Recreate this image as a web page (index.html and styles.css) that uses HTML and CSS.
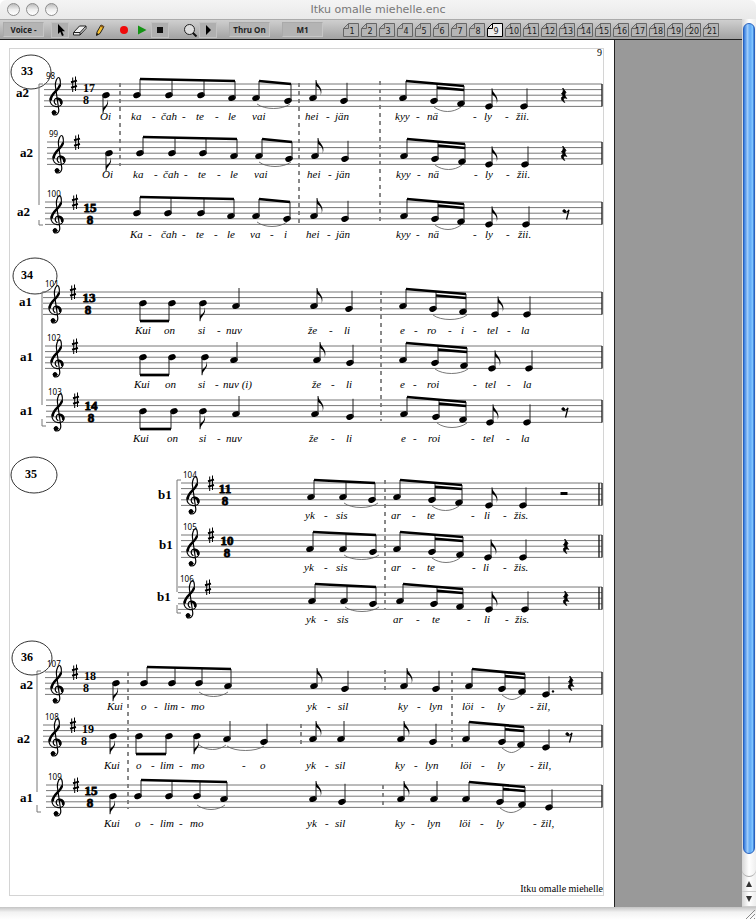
FILE: index.html
```html
<!DOCTYPE html>
<html lang="en">
<head>
    <meta charset="UTF-8">
    <meta name="viewport" content="width=device-width, initial-scale=1.0">
    <title>Itku omalle miehelle.enc</title>
    <link rel="stylesheet" href="styles.css">
</head>
<body>
    <div class="window">
        <header class="titlebar">
            <div class="lights">
                <button class="light" aria-label="Close"></button>
                <button class="light" aria-label="Minimize"></button>
                <button class="light" aria-label="Zoom window"></button>
            </div>
            <h1>Itku omalle miehelle.enc</h1>
        </header>

        <div class="main">
            <div class="content">
                <div class="toolbar">
                    <select class="field voice" aria-label="Voice">
                        <option>Voice -</option>
                    </select>
                    <div class="group tools">
                        <button class="tool pressed" aria-label="Select">
                            <svg width="16" height="14" viewBox="0 0 16 14"><path d="M6 1v10l2.300-2.200 1.700 4.200 1.800-.8-1.800-4h3z" fill="#000"/></svg>
                        </button>
                        <button class="tool" aria-label="Eraser">
                            <svg width="16" height="14" viewBox="0 0 16 14"><path d="M1.500 9.500 7.500 3h6.500l-6 6.500zM1.500 9.500v2.500h6.500V9.500M8 12l6-6.500V3" fill="#eee" stroke="#222"/></svg>
                        </button>
                        <button class="tool" aria-label="Pencil">
                            <svg width="16" height="14" viewBox="0 0 16 14"><path d="M4.500 12.500 5 9l4-7 3 1.600L8 10.500z" fill="#f4bd2c" stroke="#222"/><path d="m4.500 12.500.3-2.400 1.600 1z" fill="#000"/><path d="m9 2 3 1.600-.8 1.400-3-1.600z" fill="#8a5b1c"/></svg>
                        </button>
                    </div>
                    <div class="group">
                        <button class="tool" aria-label="Record">
                            <svg width="16" height="14" viewBox="0 0 16 14"><circle cx="8" cy="7" r="4" fill="#f00a0a"/></svg>
                        </button>
                        <button class="tool" aria-label="Play">
                            <svg width="16" height="14" viewBox="0 0 16 14"><path d="M4 2.500 12.500 7 4 11.500z" fill="#159315"/></svg>
                        </button>
                        <button class="tool pressed" aria-label="Stop">
                            <svg width="16" height="14" viewBox="0 0 16 14"><path d="M5 4h6v6H5z" fill="#111"/></svg>
                        </button>
                    </div>
                    <div class="group">
                        <button class="tool" aria-label="Magnify">
                            <svg width="16" height="14" viewBox="0 0 16 14"><circle cx="7.500" cy="6.500" r="5" fill="#ddd" stroke="#222"/><path d="m11 10 3.500 3.500" stroke="#111" stroke-width="2"/></svg>
                        </button>
                        <button class="tool pressed" aria-label="More">
                            <svg width="16" height="14" viewBox="0 0 16 14"><path d="M6 2l5 5-5 5z" fill="#000"/></svg>
                        </button>
                    </div>
                    <button class="field">Thru On</button>
                    <button class="field">M1</button>
                    <nav class="tabs" id="tabs" aria-label="Pages"></nav>
                </div>

                <main class="desk">
                    <div class="sheet">
                        <svg id="score" viewBox="0 40 614 867" role="img" aria-label="Score, page 9">
                            <defs>
                                <g id="clef" fill="none" stroke="#000" stroke-linecap="round">
                                    <path stroke-width="1.2" d="M0 20.500C-3 18.500-2 14 1.500 14 5 14 6.500 17 6 19 5.400 22 2.500 22.800 0 22.600-4 22.300-6.300 19-6 15.500-5.600 10.500 3.500 6 4.300 0 4.700-4 3.500-6.500 2.600-6.500 1-6.500-1-2-.6 2L2.800 26C3 29 1 31-1.200 31-3 31-4 29.500-3.600 28"/>
                                    <path stroke-width="2.500" d="M3.800 1.500C2.500 6.500-5.200 9.500-5.200 15.500M1.500 14.800C4 14.800 5.400 17 5.100 19"/>
                                    <circle cx="-1.900" cy="28.400" r="1.900" fill="#000"/>
                                </g>
                                <g id="sharp" fill="none" stroke="#000">
                                    <path d="M-1.300-6.500V8M1.500-7.500V7"/>
                                    <path stroke-width="2" d="M-3-1.800 3-3.400M-3 3.600 3 2"/>
                                </g>
                                <ellipse id="head" rx="3.900" ry="2.800" transform="rotate(-22)"/>
                                <path id="flag-up" d="M0 0C.5 5 8 7.500 4.600 15.500 5.800 9.500 2 7.500 0 6z"/>
                                <path id="flag-down" d="M0 0C.5-5 7-7 4.600-14 5-8.500 2-7 0-5.500z"/>
                                <path id="rest-quarter" d="M-1.300 4 2 8.300C.2 10.300.8 12 2.800 14.500-.2 13.300-1.800 15 .8 18.500-3.600 16.500-3.300 12.500-.6 12.300L-2.500 9.600C-.5 8-.3 6-1.300 4z" stroke="#000" stroke-width=".8"/>
                                <g id="rest-eighth" fill="none" stroke="#000"><circle cx="-1.800" cy="9" r="1.300" fill="#000"/><path d="M-1.800 10.300C.5 10.800 2 9.800 3 7.800L.5 17.500" stroke-width="1.300"/></g>
                                <path id="rest-half" d="M-3.500 9h7v3h-7z"/>
                            </defs>
                        </svg>
                    </div>
                </main>
            </div>

            <div class="scrollbar">
                <div class="track"><div class="thumb"></div></div>
                <button class="arrow" aria-label="Scroll up"><svg width="8" height="7" viewBox="0 0 8 7"><path d="M4 0l3 6H1z" fill="#333"/></svg></button>
                <button class="arrow" aria-label="Scroll down"><svg width="8" height="7" viewBox="0 0 8 7"><path d="M4 6L1 0h6z" fill="#333"/></svg></button>
            </div>
        </div>

        <footer class="bottombar">
            <svg width="14" height="12" viewBox="0 0 14 12"><path d="M4 12 13 3M8 12l5-5M12 12l1-1" stroke="#888"/></svg>
        </footer>
    </div>

    <script src="script.js"></script>
</body>
</html>
```

FILE: styles.css
```css
* {
    box-sizing: border-box;
}
body {
    margin: 0;
    background: #fff;
    font-family: "DejaVu Sans", sans-serif;
}
button, select {
    margin: 0;
    padding: 0;
    border: 0;
    background: none;
    color: #222;
    font-family: inherit;
}
svg {
    display: block;
}
.window {
    display: flex;
    flex-direction: column;
    min-height: 100vh;
    border-radius: 6px 6px 0 0;
    overflow: hidden;
}

/* title bar */
.titlebar {
    display: grid;
    grid-template-columns: 1fr auto 1fr;
    align-items: center;
    height: 19px;
    padding: 0 7px;
    background: linear-gradient(#f4f4f4, #e9e9e9);
}
.titlebar h1 {
    margin: 0;
    font-size: 11px;
    font-weight: normal;
    line-height: 19px;
    color: #777;
}
.lights {
    display: flex;
    gap: 6px;
}
.light {
    width: 13px;
    height: 13px;
    border: 1px solid #8d8d8d;
    border-radius: 50%;
    background: linear-gradient(#bbb, #eee 50%, #fff);
}

.main {
    flex: 1;
    display: flex;
}
.content {
    flex: 1;
    min-width: 0;
    display: flex;
    flex-direction: column;
}

/* toolbar */
.toolbar {
    display: flex;
    align-items: center;
    gap: 12px;
    height: 21px;
    padding: 0 3px;
    border-top: 1px solid #aaa;
    border-bottom: 1px solid #222;
    background: linear-gradient(#cfcfcf, #a2a2a2);
}
.field {
    width: 41px;
    height: 15px;
    border: 1px solid;
    border-color: #aaa #c6c6c6 #c6c6c6 #aaa;
    background: #b4b4b4;
    font: bold 8px "Open Sans", sans-serif;
    text-align: center;
    white-space: nowrap;
}
.voice {
    appearance: none;
    margin-right: -5px;
}
.group {
    display: flex;
}
.tools {
    gap: 2px;
    margin-right: -6px;
}
.tool {
    display: flex;
    align-items: center;
    justify-content: center;
    width: 18px;
    height: 16px;
}
.pressed {
    border: 1px solid #c2c2c2;
    background: #afafaf;
}
.tabs {
    display: flex;
    gap: 2px;
    margin-left: 8px;
}
.tab {
    width: 16px;
    height: 16px;
}
.tab svg {
    overflow: visible;
}
.tab path {
    fill: #b5b5b5;
    stroke: #666;
}
.tab text {
    font-size: 8px;
    text-anchor: middle;
    fill: #222;
}
.tab.current path {
    fill: #eee;
    stroke: #000;
}

/* the sheet of music on the desk */
.desk {
    flex: 1;
    display: flex;
    align-items: stretch;
    background: #999;
}
.sheet {
    flex: 0 1 615px;
    min-width: 0;
    border-right: 1px solid #222;
    background: #fff;
}
.sheet svg {
    width: 100%;
    font-family: "Liberation Serif", serif;
}
.frame {
    fill: none;
    stroke: #d4d4d4;
}
.line {
    fill: none;
    stroke: #777;
    stroke-width: 1;
}
.stem {
    stroke: #222;
    stroke-width: 1;
}
.beam {
    stroke: #000;
    stroke-width: 2.7;
}
.slur {
    fill: none;
    stroke: #555;
    stroke-width: 0.8;
}
.dashed {
    stroke: #111;
    stroke-dasharray: 4 4;
}
.bar {
    stroke: #222;
    stroke-width: 1.4;
}
.oval {
    fill: none;
    stroke: #333;
}
.oval-text {
    font-size: 12px;
    font-weight: bold;
}
.name {
    font-size: 13px;
    font-weight: bold;
}
.number {
    font: 8px "Noto Sans", sans-serif;
}
.time {
    font-size: 12px;
    font-weight: bold;
    text-anchor: middle;
}
.heavy {
    font-size: 13px;
    stroke: #000;
    stroke-width: 0.8;
}
.lyric {
    font-size: 11px;
    font-style: italic;
}
.page-number {
    font-size: 10px;
    text-anchor: end;
}

/* scroll bars */
.scrollbar {
    width: 14px;
    display: flex;
    flex-direction: column;
    background: linear-gradient(90deg, #d6d6d6, #fff 50%, #eee);
}
.track {
    flex: 1;
    padding: 4px 1px 22px;
    border-bottom: 1px solid #aaa;
    border-radius: 0 0 7px 7px;
}
.thumb {
    height: 100%;
    border: 1px solid #2a62bd;
    border-radius: 6px;
    background: linear-gradient(90deg, #3178dc, #9ccbfb 35%, #5ea8f6 60%, #7fc4ff 85%, #2e72d2);
}
.arrow {
    display: flex;
    align-items: center;
    justify-content: center;
    height: 15px;
    border-bottom: 1px solid #ccc;
}
.bottombar {
    display: flex;
    justify-content: flex-end;
    height: 13px;
    background: linear-gradient(#c4c4c4, #f2f2f2 40%, #fff);
}
```

FILE: script.js
```js
const GAP = 5.6;      // distance between two staff lines
const RIGHT = 602;    // right end of every staff

/*
 * notes: x:step, step counts half gaps down from the top line
 *   e / E  eighth, stem up / down      q  quarter      Q  dotted quarter
 *   b / d  beamed, stems up / down     c  beamed, last two are sixteenths
 *   s      slur x1:x2:y
 *   r4 r8 r2  rests
 */
const systems = [
    {
        label: '33', oval: [31, 72, 20, 17], labelX: 21, labelY: 75,
        bracket: [39, 84, 205, 220, 225],
        dashed: [[120, 83, 166], [299, 83, 224], [380, 81, 224]],
        staves: [
            { num: 98, top: 84, x: 44, name: 'a2', nameX: 16, nameY: 97, time: [17, 89, 86], lyricY: 120,
              notes: 'E 106:4; b 137:4 169:4 201:4 232:5; b 256:5 288:6; s 257:290:20; e 313:5; q 344:6; c 403:5 434:6 461:7; s 434:461:23; e 489:8; q 524:8; r4 564',
              lyrics: '100 Oi|131 ka|152 -|161 čah|182 -|196 te|215 -|228 le|252 vai|305 hei|326 -|335 jän|395 kyy|416 -|427 nä|473 -|484 ly|505 -|516 žii.' },
            { num: 99, top: 142, x: 47, name: 'a2', nameX: 20, nameY: 157, lyricY: 178,
              notes: 'E 109:4; b 140:4 172:4 203:4 234:5; b 259:5 289:6; s 259:291:20; e 315:5; q 345:6; c 404:5 435:6 462:7; s 435:462:23; e 489:8; q 525:8; r4 564',
              lyrics: '102 Oi|133 ka|154 -|163 čah|184 -|198 te|217 -|230 le|254 vai|307 hei|328 -|336 jän|396 kyy|417 -|428 nä|474 -|485 ly|506 -|517 žii.' },
            { num: 100, top: 202, x: 45, name: 'a2', nameX: 17, nameY: 216, time: [15, 90, 90, 'heavy'], lyricY: 238,
              notes: 'b 137:4 168:4 201:4 231:5; b 256:5 287:6; s 257:287:20; e 314:5; q 345:6; c 404:5 435:6 461:7; s 435:461:23; e 489:8; q 526:8; r8 566',
              lyrics: '130 Ka|148 -|161 čah|182 -|196 te|214 -|227 le|250 va|270 -|284 i|306 hei|327 -|336 jän|396 kyy|416 -|428 nä|473 -|485 ly|506 -|518 žii.' }
        ]
    },
    {
        label: '34', oval: [35, 276, 22, 18], labelX: 21, labelY: 279,
        bracket: [42, 292, 405, 419, 426],
        dashed: [[381, 291, 421]],
        staves: [
            { num: 101, top: 292, x: 43, name: 'a1', nameX: 19, nameY: 306, time: [13, 89, 88, 'heavy'], lyricY: 334,
              notes: 'd 143:4 172:4; E 203:4; q 236:5; e 314:5; q 349:6; c 403:5 433:6 463:7; s 433:467:23; e 495:8; q 527:8',
              lyrics: '135 Kui|164 on|198 si|217 -|226 nuv|308 že|329 -|344 li|400 e|414 -|427 ro|448 -|461 i|473 -|487 tel|507 -|521 la' },
            { num: 102, top: 346, x: 45, name: 'a1', nameX: 20, nameY: 361, lyricY: 388,
              notes: 'd 143:4 172:4; E 205:4; q 234:5; e 317:5; q 350:6; c 403:5 435:6 464:7; s 435:468:23; e 492:8; q 529:8',
              lyrics: '134 Kui|165 on|198 si|215 -|223 nuv (i)|312 že|331 -|346 li|400 e|413 -|427 roi|473 -|485 tel|507 -|523 la' },
            { num: 103, top: 400, x: 46, name: 'a1', nameX: 20, nameY: 415, time: [14, 91, 91, 'heavy'], lyricY: 442,
              notes: 'd 143:4 174:4; E 203:4; q 236:5; e 315:5; q 350:6; c 404:5 436:6 463:7; s 437:467:23; e 490:8; q 527:8; r8 565',
              lyrics: '133 Kui|167 on|199 si|217 -|226 nuv|309 že|331 -|346 li|401 e|413 -|428 roi|471 -|483 tel|506 -|521 la' }
        ]
    },
    {
        label: '35', oval: [34, 475, 23, 18], labelX: 25, labelY: 478, double: true,
        bracket: [177, 480, 592, 605, 613],
        dashed: [[385, 480, 609]],
        staves: [
            { num: 104, top: 483, x: 181, name: 'b1', nameX: 158, nameY: 499, time: [11, 225, 225, 'heavy'], lyricY: 519,
              notes: 'b 311:5 343:5 372:6; s 344:378:20; c 397:5 432:6 459:7; s 432:459:23; e 489:8; q 523:8; r2 564',
              lyrics: '305 yk|324 -|336 sis|391 ar|412 -|427 te|471 -|484 li|503 -|514 žis.' },
            { num: 105, top: 535, x: 181, name: 'b1', nameX: 159, nameY: 549, time: [10, 227, 227, 'heavy'], lyricY: 571,
              notes: 'b 310:5 343:5 373:6; s 344:379:20; c 397:5 432:6 460:7; s 432:460:23; e 488:8; q 523:8; r4 566',
              lyrics: '304 yk|324 -|336 sis|391 ar|412 -|427 te|472 -|483 li|503 -|514 žis.' },
            { num: 106, top: 587, x: 178, name: 'b1', nameX: 157, nameY: 601, lyricY: 623,
              notes: 'b 312:5 344:5 373:6; s 345:379:20; c 400:5 434:6 460:7; e 489:8; q 525:8; r4 566',
              lyrics: '306 yk|324 -|337 sis|393 ar|416 -|432 te|467 -|484 li|505 -|515 žis.' }
        ]
    },
    {
        label: '36', oval: [32, 658, 20, 17], labelX: 21, labelY: 661,
        bracket: [37, 671, 792, 805, 812],
        dashed: [[128, 672, 809], [385, 670, 693], [301, 724, 747], [452, 672, 747], [383, 785, 808]],
        staves: [
            { num: 107, top: 672, x: 45, name: 'a2', nameX: 20, nameY: 689, time: [18, 90, 86], lyricY: 710,
              notes: 'E 116:4; b 144:4 172:4 199:4 228:5; s 199:228:20; e 314:5; q 345:6; e 404:5; q 436:6; c 469:5 502:6 522:7; s 502:522:23; Q 546:8; r4 571',
              lyrics: '107 Kui|141 o|154 -|164 lim|181 -|191 mo|307 yk|327 -|338 sil|398 ky|417 -|429 lyn|462 löi|481 -|497 ly|530 -|537 žil,' },
            { num: 108, top: 725, x: 43, name: 'a2', nameX: 17, nameY: 743, time: [19, 88, 84], lyricY: 769,
              notes: 'E 113:4; d 139:4 169:4; E 197:4; q 227:5; q 264:6; s 199:226:20; s 227:264:21; e 313:5; q 341:5; e 401:5; q 433:6; c 466:5 502:6 521:7; s 502:521:23; q 546:8; r8 569',
              lyrics: '104 Kui|136 o|151 -|160 lim|179 -|191 mo|242 -|260 o|306 yk|325 -|335 sil|395 ky|414 -|425 lyn|460 löi|481 -|497 ly|530 -|538 žil,' },
            { num: 109, top: 785, x: 46, name: 'a1', nameX: 20, nameY: 802, time: [15, 91, 90, 'heavy'], lyricY: 827,
              notes: 'E 113:4; b 138:4 169:4 197:4 224:5; s 197:225:20; e 313:5; q 342:6; e 401:5; q 434:5; c 466:5 500:6 522:7; s 500:522:23; q 549:8',
              lyrics: '104 Kui|135 o|150 -|160 lim|179 -|190 mo|307 yk|325 -|335 sil|395 ky|411 -|427 lyn|459 löi|480 -|496 ly|533 -|541 žil,' }
        ]
    }
];

const line = (cls, x1, y1, x2, y2) => `<line class="${cls}" x1="${x1}" y1="${y1}" x2="${x2}" y2="${y2}"/>`;
const text = (cls, x, y, str) => `<text class="${cls}" x="${x}" y="${y}">${str}</text>`;
const use = (id, x, y) => `<use href="#${id}" x="${x}" y="${y}"/>`;

function drawBeam(kind, notes) {
    const down = kind === 'd';
    const dx = down ? -3 : 3;
    const first = notes[0];
    const last = notes[notes.length - 1];
    let y1 = -3, y2 = 0;
    if (notes.length === 4) { y1 = -5; y2 = -3; }
    if (kind === 'c') { y1 = -3; y2 = 2; }
    if (down) { y1 = y2 = 29; }
    const at = x => y1 + (y2 - y1) * (x - first[0]) / (last[0] - first[0]);

    let out = '';
    for (const [x, step] of notes) {
        out += use('head', x, step * GAP / 2) + line('stem', x + dx, step * GAP / 2, x + dx, at(x));
    }
    out += line('beam', first[0] + dx, y1, last[0] + dx, y2);
    if (kind === 'c') {
        const mid = notes[1][0];
        out += line('beam', mid + dx, at(mid) + 4, last[0] + dx, y2 + 4);
    }
    return out;
}

function drawItem(item) {
    const [kind, ...rest] = item.trim().split(' ');
    const notes = rest.map(n => n.split(':').map(Number));
    const [x, step, extra] = notes[0];
    const y = step * GAP / 2;

    switch (kind) {
        case 'b': case 'c': case 'd':
            return drawBeam(kind, notes);
        case 's':
            return `<path class="slur" d="M${x} ${extra}C${x + 8} ${extra + 6} ${step - 8} ${extra + 6} ${step} ${extra}"/>`;
        case 'r4': return use('rest-quarter', x, 0);
        case 'r8': return use('rest-eighth', x, 0);
        case 'r2': return use('rest-half', x, 0);
        case 'E':
            return use('head', x, y) + line('stem', x - 3, y, x - 3, y + 18) + use('flag-down', x - 3, y + 18);
    }
    let out = use('head', x, y) + line('stem', x + 3, y, x + 3, y - 18);
    if (kind === 'e') out += use('flag-up', x + 3, y - 18);
    if (kind === 'Q') out += `<circle cx="${x + 7}" cy="${y - 3}" r="1.2"/>`;
    return out;
}

function drawStaff(s, double) {
    let out = '';
    for (let i = 0; i < 5; i++) out += line('line', s.x, i * GAP, RIGHT, i * GAP);
    out += line('bar', RIGHT, 0, RIGHT, 4 * GAP);
    if (double) out += line('bar', RIGHT - 3, 0, RIGHT - 3, 4 * GAP);
    out += use('clef', s.x + 12, 0) + use('sharp', s.x + 30, 0) + text('number', s.x + 2, -5, s.num);
    if (s.time) {
        const [beats, x1, x2, heavy] = s.time;
        const cls = heavy ? 'time heavy' : 'time';
        out += text(cls, x1, heavy ? 10 : 8, beats) + text(cls, x2, heavy ? 22 : 20, 8);
    }
    out += s.notes.split(';').map(drawItem).join('');
    out = `<g transform="translate(0 ${s.top})">${out}</g>`;

    out += text('name', s.nameX, s.nameY, s.name);
    for (const l of s.lyrics.split('|')) {
        const cut = l.indexOf(' ');
        out += text('lyric', l.slice(0, cut), s.lyricY, l.slice(cut + 1));
    }
    return out;
}

function drawSystem(sys) {
    const [cx, cy, rx, ry] = sys.oval;
    const [bx, top, end, footTop, foot] = sys.bracket;
    return `<ellipse class="oval" cx="${cx}" cy="${cy}" rx="${rx}" ry="${ry}"/>`
        + text('oval-text', sys.labelX, sys.labelY, sys.label)
        + `<path class="line" d="M${bx + 4} ${top}H${bx}V${end}M${bx} ${footTop}V${foot}H${bx + 4}"/>`
        + sys.dashed.map(([x, y1, y2]) => line('dashed', x, y1, x, y2)).join('')
        + sys.staves.map(s => drawStaff(s, sys.double)).join('');
}

document.getElementById('score').insertAdjacentHTML('beforeend',
    '<rect class="frame" x="9.5" y="48.5" width="594" height="847"/>'
    + text('page-number', 602, 56, 9)
    + systems.map(drawSystem).join('')
    + text('page-number', 603, 892, 'Itku omalle miehelle'));

// page tabs
let tabs = '';
for (let i = 1; i <= 21; i++) {
    tabs += `<button class="tab${i === 9 ? ' current' : ''}" aria-label="Page ${i}">
        <svg width="16" height="16" viewBox="0 0 16 16">
            <path d="M5.500 1.500h10v13H.5v-8zM5.500 1.500v5h-5"/>
            <text x="9" y="12">${i}</text>
        </svg></button>`;
}
document.getElementById('tabs').innerHTML = tabs;
```
